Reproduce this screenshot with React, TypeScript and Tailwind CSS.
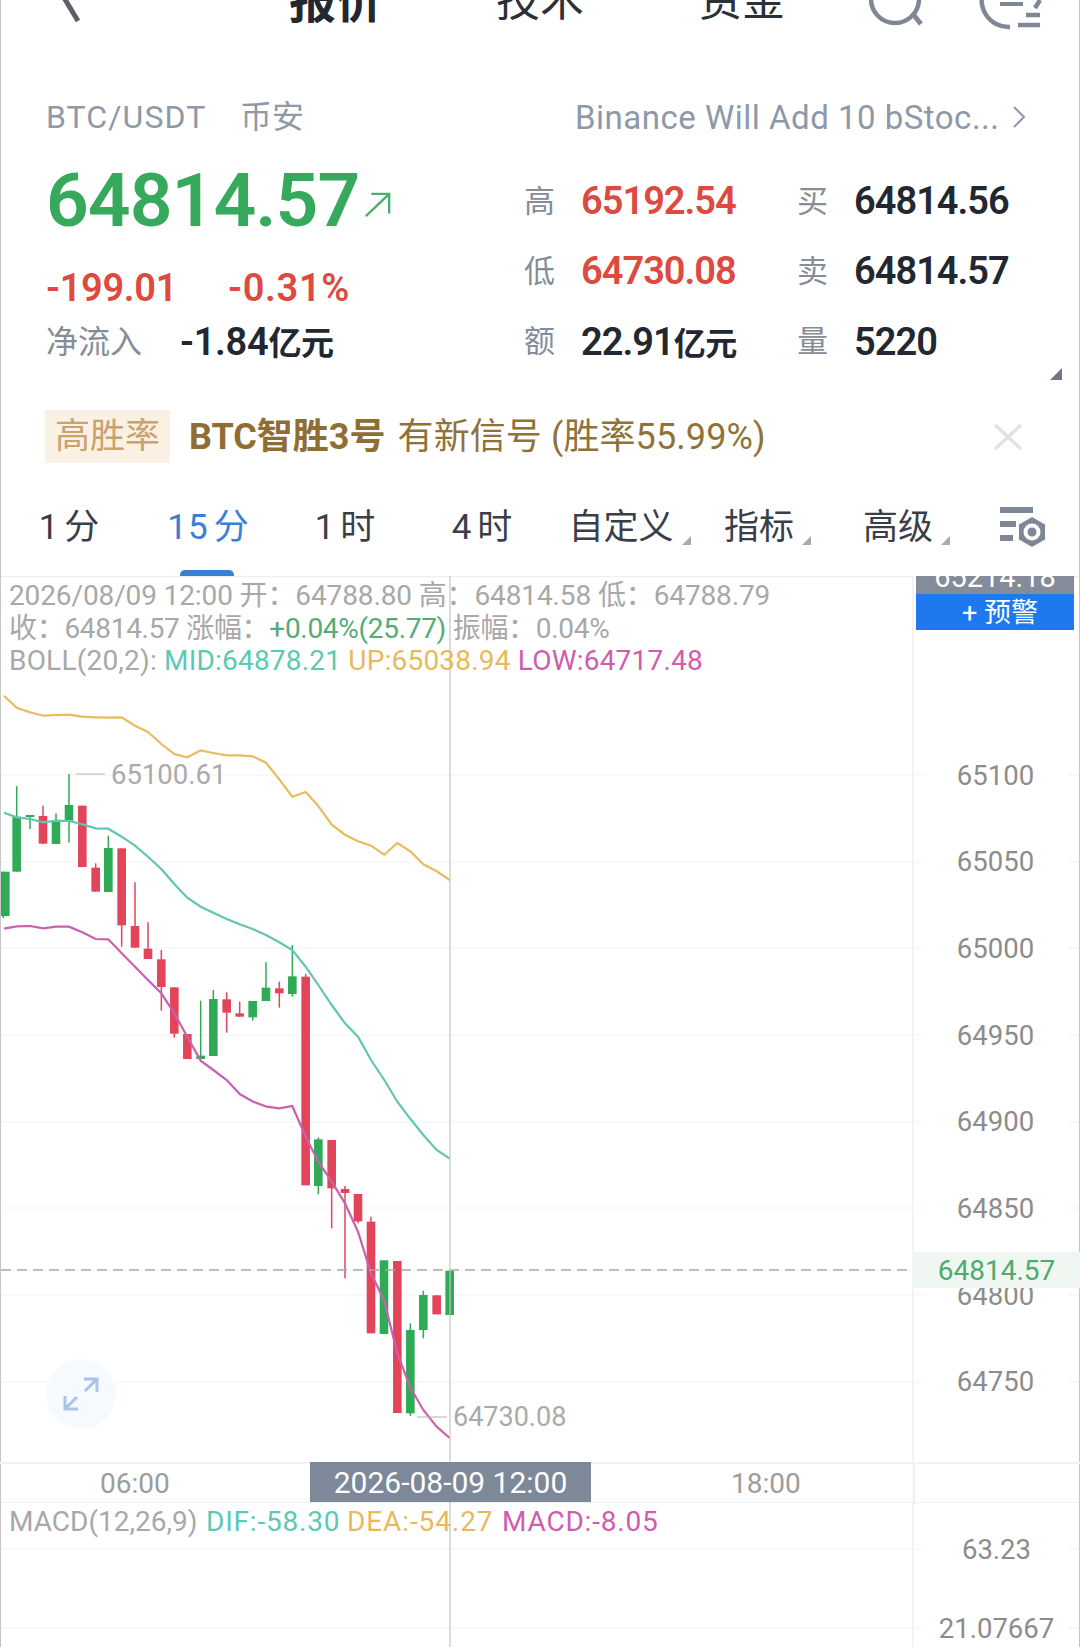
import React from "react";

type C = [number, number, number, number, number, "g" | "r"];
const z3 = (y: number) => 680 + y / 3;
const z4 = (y: number) => 1060 + y / 3;
const raw3: [number, number, number, number, number, "g" | "r"][] = [
  [10, 575, 708, 575, 714, "g"], [50, 410, 575, 318, 575, "g"], [90, 405, 410, 405, 447, "g"],
  [129, 408, 491, 377, 491, "r"], [168, 425, 492, 400, 492, "g"], [207, 375, 422, 282, 488, "g"],
  [247, 377, 561, 377, 561, "r"], [287, 563, 635, 550, 635, "r"], [325, 504, 636, 467, 636, "g"],
  [365, 505, 736, 505, 800, "r"], [405, 738, 803, 607, 803, "r"], [444, 806, 837, 727, 837, "r"],
  [484, 838, 921, 810, 992, "r"], [523, 922, 1061, 922, 1073, "r"], [562, 1062, 1137, 1062, 1137, "r"],
  [602, 1127, 1137, 962, 1137, "g"], [640, 957, 1128, 930, 1128, "g"], [680, 958, 998, 937, 1058, "r"],
  [719, 1000, 1010, 965, 1010, "r"], [758, 963, 1012, 963, 1022, "g"], [798, 923, 963, 847, 963, "g"],
  [838, 925, 940, 905, 983, "r"], [877, 889, 942, 795, 950, "g"],
];
const raw4: [number, number, number, number, number, "g" | "r"][] = [
  [955, 238, 378, 232, 403, "g"], [995, 240, 385, 240, 505, "r"], [1035, 387, 399, 378, 655, "r"],
  [1074, 402, 484, 402, 490, "r"], [1113, 485, 820, 470, 820, "r"], [1152, 601, 822, 601, 822, "g"],
  [1192, 603, 1059, 603, 1059, "r"], [1231, 810, 1060, 790, 1068, "g"], [1270, 705, 810, 692, 835, "g"],
  [1310, 706, 763, 706, 763, "r"], [1349, 632, 765, 632, 765, "g"],
];
const candles: C[] = [
  ...raw3.map((c): C => [c[0] / 3, z3(c[1]), z3(c[2]), z3(c[3]), z3(c[4]), c[5]]),
  [917 / 3, z3(890), z4(376), z3(882), z4(376), "r"],
  ...raw4.map((c): C => [c[0] / 3, z4(c[1]), z4(c[2]), z4(c[3]), z4(c[4]), c[5]]),
];

const pts3 = (a: number[][]) => a.map(([x, y]) => `${(x / 3).toFixed(1)},${z3(y).toFixed(1)}`).join(" ");
const pts4 = (a: number[][]) => a.map(([x, y]) => `${(x / 3).toFixed(1)},${z4(y).toFixed(1)}`).join(" ");

const up = pts3([[12,47],[50,83],[90,97],[130,107],[168,105],[207,104],[247,110],[287,112],[325,113],[365,112],[405,137],[444,156],[484,192],[523,222],[562,232],[602,211],[640,219],[680,226],[719,226],[758,229],[798,248],[838,298],[877,350],[917,336],[955,378],[995,434],[1035,464],[1074,484],[1113,497],[1153,524],[1192,489],[1232,515],[1270,553],[1310,574],[1349,600]]);
const mid = pts3([[12,398],[50,412],[90,417],[130,427],[168,422],[207,423],[247,433],[287,445],[325,446],[365,470],[405,497],[444,530],[484,567],[523,612],[562,653],[602,680],[640,698],[680,717],[719,733],[758,747],[798,765],[838,787],[877,810],[917,860],[955,915],[995,975],[1035,1030],[1074,1070],[1113,1140],[1153,1200]]) + " " + pts4([[1192,125],[1232,178],[1270,225],[1310,270],[1349,296]]);
const low = pts3([[12,746],[50,739],[90,738],[130,745],[168,740],[207,740],[247,757],[287,777],[325,778],[365,820],[405,860],[444,900],[484,940],[523,1000],[562,1070],[602,1142],[640,1170],[680,1200]]) + " " + pts4([[720,103],[760,125],[800,140],[838,145],[877,138],[917,230],[955,305],[995,365],[1035,430],[1074,515],[1113,640],[1152,720],[1192,880],[1232,985],[1270,1050],[1310,1100],[1349,1134]]);

const gridY = [775, 862, 948, 1035, 1122, 1208, 1295, 1382];
const axis = ["65100", "65050", "65000", "64950", "64900", "64850", "64800", "64750"];

function Stat({ label, value, color, unit }: { label: string; value: string; color: string; unit?: string }) {
  return (
    <div className="flex items-center">
      <span className="-ml-[1px] w-[57px] text-[31px] leading-none text-[#858d99]">{label}</span>
      <span className={`text-[38px] leading-none font-semibold tracking-[-1px] ${color}`}>
        {value}
        {unit && <span className="text-[32px] tracking-[-0.5px]">{unit}</span>}
      </span>
    </div>
  );
}

function Tab({ label, num, w, active, caret }: { label: string; num?: string; w: string; active?: boolean; caret?: string }) {
  return (
    <div className={`relative flex h-[44px] items-center justify-center ${w}`}>
      <span className={`relative whitespace-nowrap text-[35px] leading-none ${active ? "text-[#3b7fd4]" : "text-[#3a3f47]"}`}>
        {num && <span className="mr-[5px] tracking-[1px]">{num}</span>}
        {label}
      </span>
      {caret && (
        <svg viewBox="0 0 10 10" className={`absolute bottom-[4px] h-[9px] w-[9px] ${caret}`}>
          <polygon points="10,0 10,10 0,10" fill="#a6acb5" />
        </svg>
      )}
      {active && <div className="absolute top-[65px] left-[42px] h-[6px] w-[54px] rounded-t-[5px] bg-[#3b7fd4]" />}
    </div>
  );
}

export default function App() {
  return (
    <div className="relative h-[1647px] w-[1080px] overflow-hidden bg-white font-['Roboto','Noto_Sans_CJK_SC',sans-serif] shadow-[inset_1px_0_0_#c6c6c6,inset_-1px_0_0_#c6c6c6]">
      {/* header */}
      <div className="h-[96px] overflow-hidden">
        <div className="-mt-[29px] flex h-[60px] items-center">
          <svg viewBox="0 0 30 60" className="ml-[54px] h-[60px] w-[30px] overflow-visible">
            <path d="M6 20 L24 50" stroke="#5b6068" strokeWidth="5" fill="none" />
          </svg>
          <span className="ml-[205px] text-[47px] leading-none font-bold text-[#23272f]">报价</span>
          <span className="ml-[113px] text-[44px] leading-none text-[#2b2f37]">技术</span>
          <span className="ml-[115px] text-[43px] leading-none text-[#2b2f37]">资金</span>
          <svg viewBox="0 0 60 60" className="ml-[86px] h-[60px] w-[60px] overflow-visible">
            <circle cx="24" cy="28" r="24" stroke="#7f8795" strokeWidth="4.5" fill="none" />
            <path d="M41 42 L50 53" stroke="#7f8795" strokeWidth="5" fill="none" />
          </svg>
          <svg viewBox="0 0 60 60" className="ml-[52px] h-[60px] w-[60px] overflow-visible">
            <path d="M2 16 A27 27 0 0 0 27 56" stroke="#7f8795" strokeWidth="4.5" fill="none" />
            <path d="M57 29 L52 37" stroke="#7f8795" strokeWidth="4.5" fill="none" />
            <path d="M17 33 H40" stroke="#7f8795" strokeWidth="4" fill="none" />
            <path d="M43 44 H57 M35 54 H57" stroke="#7f8795" strokeWidth="4.5" fill="none" />
          </svg>
        </div>
      </div>

      {/* title row */}
      <div className="flex h-[42px] items-center pl-[46px] text-[#8e99a8]">
        <span className="w-[194px] text-[32px] leading-none tracking-[1.1px]">BTC/USDT</span>
        <span className="text-[32px] leading-none">币安</span>
        <span className="ml-[271px] w-[427px] text-[33px] leading-none tracking-[0.5px] whitespace-nowrap">Binance Will Add 10 bStoc...</span>
        <svg viewBox="0 0 14 24" className="ml-[10px] h-[24px] w-[14px]">
          <path d="M2 2 L12 12 L2 22" stroke="#8e99a8" strokeWidth="2" fill="none" />
        </svg>
      </div>

      {/* quote */}
      <div className="relative mt-[28px] flex h-[211px]">
        <div className="w-[525px] pl-[46px]">
          <div className="flex h-[68px] items-center">
            <span className="text-[75px] leading-none font-semibold tracking-[-1px] text-[#37a95c]">64814.57</span>
            <svg viewBox="0 0 30 30" className="mt-[10px] ml-[4px] h-[28px] w-[30px]">
              <path d="M2 27 L27 3 M8 3 H27 V24" stroke="#4aae6e" strokeWidth="2.5" fill="none" />
            </svg>
          </div>
          <div className="mt-[36px] flex h-[36px] items-center text-[38px] leading-none font-semibold text-[#dc4a40]">
            <span className="w-[182px] tracking-[-0.3px]">-199.01</span>
            <span className="tracking-[0.7px]">-0.31%</span>
          </div>
          <div className="mt-[18px] flex h-[36px] items-center">
            <span className="w-[134px] text-[32px] leading-none text-[#858d99]">净流入</span>
            <span className="text-[38px] leading-none font-semibold tracking-[-0.3px] text-[#23272f]">
              -1.84<span className="text-[33px]">亿元</span>
            </span>
          </div>
        </div>
        <div className="grid flex-1 grid-cols-[273px_1fr] grid-rows-3">
          <Stat label="高" value="65192.54" color="text-[#dc4a40]" />
          <Stat label="买" value="64814.56" color="text-[#23272f]" />
          <Stat label="低" value="64730.08" color="text-[#dc4a40]" />
          <Stat label="卖" value="64814.57" color="text-[#23272f]" />
          <Stat label="额" value="22.91" unit="亿元" color="text-[#23272f]" />
          <Stat label="量" value="5220" color="text-[#23272f]" />
        </div>
        <svg viewBox="0 0 12 12" className="absolute top-[202px] left-[1050px] h-[12px] w-[12px]">
          <polygon points="12,0 12,12 0,12" fill="#6f7784" />
        </svg>
      </div>

      {/* signal */}
      <div className="mt-[33px] flex h-[53px] items-center pl-[45px]">
        <span className="flex h-[53px] w-[125px] items-center justify-center bg-[#faf0e4] text-[35px] leading-none text-[#c9a26d]">高胜率</span>
        <span className="ml-[19px] text-[36px] leading-none font-bold text-[#8f6e34]">BTC智胜3号</span>
        <span className="ml-[12px] text-[36px] leading-none tracking-[0.1px] text-[#8f7238]">有新信号 (胜率55.99%)</span>
        <svg viewBox="0 0 30 28" className="ml-auto mr-[57px] h-[28px] w-[30px]">
          <path d="M2 2 L28 26 M28 2 L2 26" stroke="#dfe2e6" strokeWidth="3.5" fill="none" />
        </svg>
      </div>

      {/* tabs */}
      <div className="mt-[42px] flex h-[71px] items-start">
        <Tab num="1" label="分" w="w-[138px]" />
        <Tab num="15" label="分" w="w-[140px]" active />
        <Tab num="1" label="时" w="w-[134px]" />
        <Tab num="4" label="时" w="w-[140px]" />
        <Tab label="自定义" w="w-[138px]" caret="left-[130px]" />
        <Tab label="指标" w="w-[138px]" caret="left-[112px]" />
        <Tab label="高级" w="w-[140px]" caret="left-[113px]" />
        <div className="flex h-[44px] w-[112px] items-center justify-center">
          <svg viewBox="0 0 48 44" className="h-[44px] w-[48px]">
            <path d="M0 5 H33 M0 19 H16 M0 33 H13" stroke="#7d8795" strokeWidth="6" fill="none" />
            <path d="M32 12 L45 19.5 V34.5 L32 42 L19 34.5 V19.5 Z" fill="#7d8795" />
            <circle cx="32" cy="27" r="8.5" fill="#ffffff" />
            <circle cx="32" cy="27" r="4.5" fill="#7d8795" />
          </svg>
        </div>
      </div>

      {/* chart */}
      <div className="relative h-[886px]">
        <svg viewBox="0 576 1080 886" className="absolute inset-0 h-[886px] w-[1080px]">
          <line x1="1" x2="1079" y1="576.5" y2="576.5" stroke="#eeeeee" strokeWidth="1.5" />
          {gridY.map((y) => (
            <g key={y} stroke="#f3f3f3" strokeWidth="1.2">
              <line x1="1" x2="924" y1={y} y2={y} />
              <line x1="1068" x2="1079" y1={y} y2={y} />
            </g>
          ))}
          <line x1="913" x2="913" y1="576" y2="1462" stroke="#efefef" strokeWidth="1.5" />
          <polyline points={up} fill="none" stroke="#e8bb5e" strokeWidth="2.2" />
          {candles.map((c, i) => {
            const col = c[5] === "g" ? "#2fab57" : "#e2455a";
            return (
              <g key={i}>
                <line x1={c[0]} x2={c[0]} y1={c[3]} y2={c[4]} stroke={col} strokeWidth="1.5" />
                <rect x={Math.max(c[0] - 4.3, 1)} y={c[1]} width={8.6} height={Math.max(c[2] - c[1], 2)} fill={col} />
              </g>
            );
          })}
          <polyline points={mid} fill="none" stroke="#62c4b2" strokeWidth="2.2" />
          <polyline points={low} fill="none" stroke="#cb5fb0" strokeWidth="2.2" />
          <line x1="1" x2="913" y1="1270" y2="1270" stroke="#a8a8a8" strokeWidth="1.5" strokeDasharray="10 6" />
          <line x1="450" x2="450" y1="576" y2="1462" stroke="#c4c4c4" strokeWidth="1.2" />
          <line x1="76" x2="105" y1="774" y2="774" stroke="#b4b4b4" strokeWidth="1" />
          <line x1="417" x2="447" y1="1417" y2="1417" stroke="#b4b4b4" strokeWidth="1" />
        </svg>

        <div className="absolute top-[4px] left-[9px] text-[28px] leading-[32.5px] whitespace-nowrap text-[#a8a8a8]">
          <div className="tracking-[-0.12px]">2026/08/09 12:00 开：64788.80 高：64814.58 低：64788.79</div>
          <div className="tracking-[-0.3px]">
            收：64814.57 涨幅：<span className="text-[#55ab78]">+0.04%(25.77)</span> 振幅：0.04%
          </div>
          <div className="tracking-[0.2px]">
            BOLL(20,2): <span className="text-[#5cc9b4]">MID:64878.21</span> <span className="text-[#e8b95c]">UP:65038.94</span> <span className="text-[#d05cb0]">LOW:64717.48</span>
          </div>
        </div>

        <span className="absolute top-[185px] left-[111px] text-[27.5px] leading-none text-[#aaaaaa]">65100.61</span>
        <span className="absolute top-[828px] left-[453px] text-[27px] leading-none text-[#aaaaaa]">64730.08</span>

        <div className="absolute top-[783px] left-[46px] flex h-[70px] w-[70px] items-center justify-center rounded-full bg-[#f6f9fd]">
          <svg viewBox="0 0 36 36" className="h-[36px] w-[36px]">
            <path d="M21 3 H34 V16 M34 3 L22 15 M2 20 V33 H15 M2 33 L14 21" stroke="#a9c4e8" strokeWidth="3" fill="none" />
          </svg>
        </div>

        {/* price axis */}
        <div className="absolute top-[156px] right-0 flex w-[167px] flex-col">
          {axis.map((a) => (
            <div key={a} className="flex h-[86.7px] items-center justify-center pr-[2px] text-[27.5px] leading-none text-[#8c8c8c]">
              {a}
            </div>
          ))}
        </div>

        <div className="absolute top-0 left-[916px] w-[158px]">
          <div className="flex h-[18px] items-end justify-center overflow-hidden bg-[#848c99] pb-[7px] text-[29px] leading-[20px] text-white">65214.18</div>
          <div className="flex h-[36px] items-center justify-center bg-[#1e78ee] pt-[3px] pl-[10px] text-[27px] leading-none text-white">+ 预警</div>
        </div>

        <div className="absolute top-[676px] right-0 flex h-[36px] w-[167px] items-center justify-center bg-[#f0f7f2] pt-[2px] text-[28px] leading-none text-[#4dab6c]">
          64814.57
        </div>
      </div>

      {/* time axis */}
      <div className="relative flex h-[40px] items-center border-t-2 border-[#f2f2f2] pt-[1px] text-[28px] leading-none text-[#9c9c9c]">
        <span className="absolute left-[100px]">06:00</span>
        <div className="absolute -top-[2px] left-[310px] flex h-[40px] w-[281px] items-center justify-center bg-[#7d8899] pt-[1px] text-[30px] text-white">2026-08-09 12:00</div>
        <span className="absolute left-[731px]">18:00</span>
        <div className="absolute top-0 left-[913px] h-[40px] w-[1.5px] bg-[#efefef]" />
      </div>

      {/* macd */}
      <div className="relative h-[145px]">
        <svg viewBox="0 1502 1080 145" className="absolute inset-0 h-[145px] w-[1080px]">
          <line x1="1" x2="1079" y1="1502" y2="1502" stroke="#f0f0f0" strokeWidth="2" />
          {[1549, 1628].map((y) => (
            <g key={y} stroke="#f3f3f3" strokeWidth="1.2">
              <line x1="1" x2="924" y1={y} y2={y} />
              <line x1="1068" x2="1079" y1={y} y2={y} />
            </g>
          ))}
          <line x1="913" x2="913" y1="1502" y2="1647" stroke="#efefef" strokeWidth="1.5" />
          <line x1="450" x2="450" y1="1502" y2="1647" stroke="#c4c4c4" strokeWidth="1.2" />
        </svg>
        <div className="absolute top-[7px] left-[9px] flex text-[28px] leading-[26px] whitespace-nowrap text-[#a8a8a8]">
          <span className="w-[197px]">MACD(12,26,9)</span>
          <span className="w-[141px] tracking-[0.8px] text-[#5cc9b4]">DIF:-58.30</span>
          <span className="w-[155px] tracking-[0.9px] text-[#e8b95c]">DEA:-54.27</span>
          <span className="tracking-[0.8px] text-[#d05cb0]">MACD:-8.05</span>
        </div>
        <div className="absolute top-[35px] right-0 flex w-[167px] flex-col">
          <div className="flex h-[26px] items-center justify-center text-[27.5px] leading-none text-[#8c8c8c]">63.23</div>
          <div className="mt-[53px] flex h-[26px] items-center justify-center text-[27.5px] leading-none text-[#8c8c8c]">21.07667</div>
        </div>
      </div>
    </div>
  );
}
